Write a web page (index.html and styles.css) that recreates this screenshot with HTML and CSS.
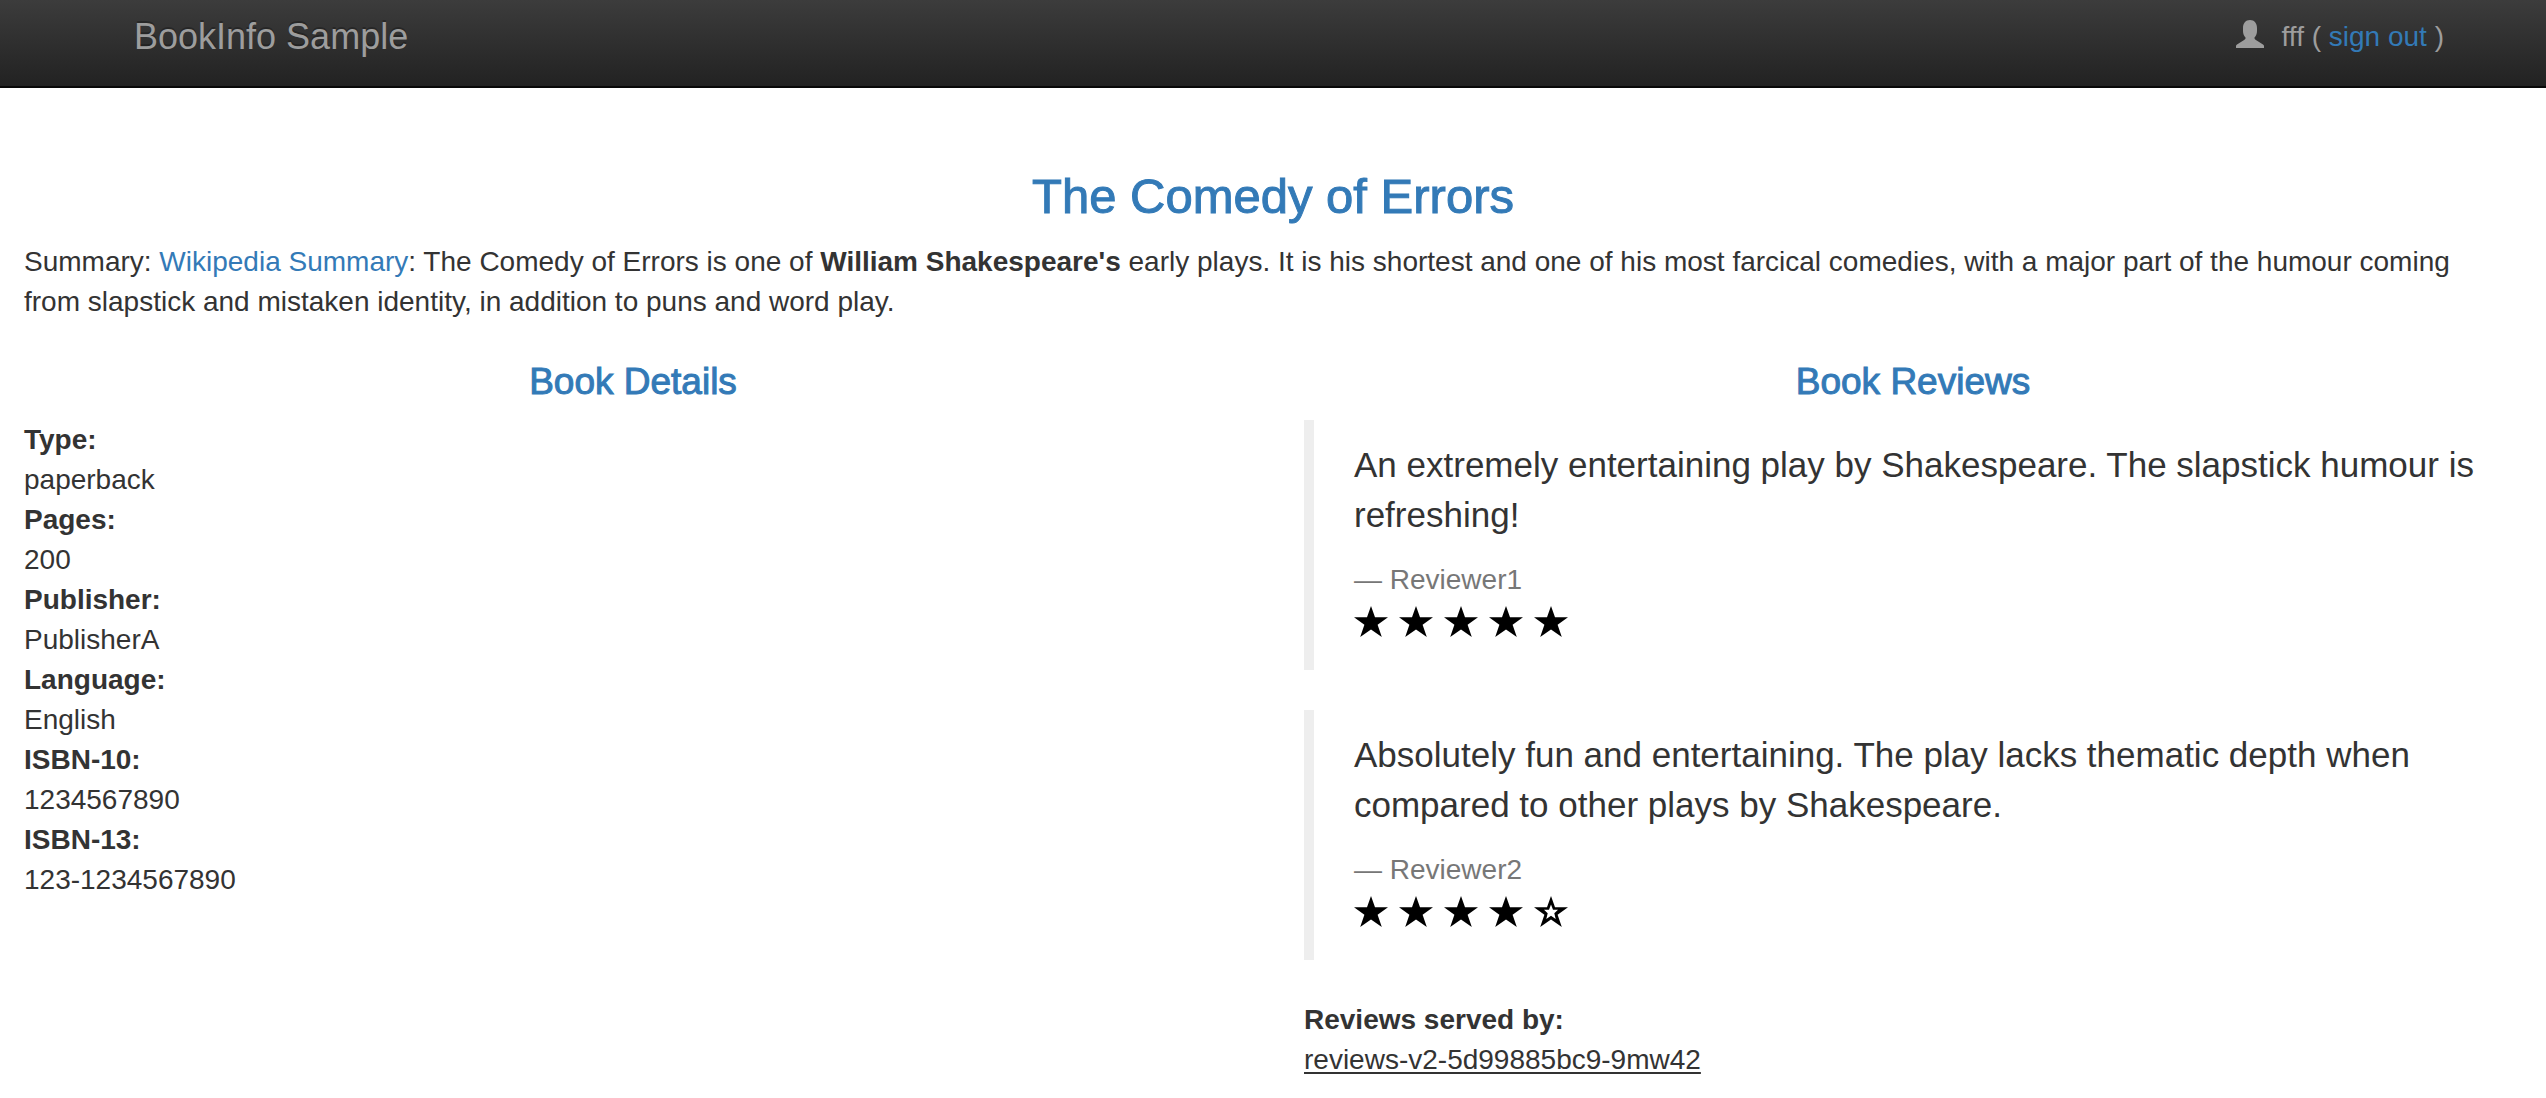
FILE: index.html
```html
<!DOCTYPE html>
<html lang="en">
<head>
<meta charset="utf-8">
<title>Simple Bookstore App</title>
<meta name="viewport" content="width=device-width, initial-scale=1">
<link rel="stylesheet" href="styles.css">
</head>
<body>
<svg class="sprite" aria-hidden="true">
  <symbol id="star" viewBox="0 0 34 31"><path d="M17 0 21 11.2H34L23.6 18.8 27.8 31 17 23.5 6.2 31 10.4 18.8 0 11.2H13Z"/></symbol>
  <symbol id="star-empty" viewBox="0 0 34 31"><path fill-rule="evenodd" d="M17 0 21 11.2H34L23.6 18.8 27.8 31 17 23.5 6.2 31 10.4 18.8 0 11.2H13ZM17 8.500 15 13.800H10L13.700 17.300 12.300 23 17 19.800 21.700 23 20.300 17.300 24 13.800H19Z"/></symbol>
</svg>
<nav class="navbar">
  <a class="brand" href="#">BookInfo Sample</a>
  <p class="user">
    <svg class="user-icon" viewBox="0 0 28 28" aria-hidden="true"><path d="M14 0C9.500 0 7 3.500 7 8v3c0 3 1 5 2.500 6.500v.8c0 .7-.4 1-1 1.400L1 24.500c-.7.400-1 .8-1 1.500V28h28V26c0-.7-.3-1.100-1-1.500l-7.500-4.800c-.6-.4-1-.7-1-1.400v-.8C20 16 21 14 21 11V8c0-4.500-2.500-8-7-8Z"/></svg>
    <span>fff ( <a href="#">sign out</a> )</span>
  </p>
</nav>
<main class="page">
  <h1 class="title">The Comedy of Errors</h1>
  <p class="summary">Summary: <a href="#">Wikipedia Summary</a>: The Comedy of Errors is one of <b>William Shakespeare's</b> early plays. It is his shortest and one of his most farcical comedies, with a major part of the humour coming from slapstick and mistaken identity, in addition to puns and word play.</p>
  <div class="columns">
    <section>
      <h2 class="section-title">Book Details</h2>
      <dl class="details">
        <dt>Type:</dt><dd>paperback</dd>
        <dt>Pages:</dt><dd>200</dd>
        <dt>Publisher:</dt><dd>PublisherA</dd>
        <dt>Language:</dt><dd>English</dd>
        <dt>ISBN-10:</dt><dd>1234567890</dd>
        <dt>ISBN-13:</dt><dd>123-1234567890</dd>
      </dl>
    </section>
    <section>
      <h2 class="section-title">Book Reviews</h2>
      <blockquote class="review">
        <p>An extremely entertaining play by Shakespeare. The slapstick humour is refreshing!</p>
        <small>— Reviewer1</small>
        <div class="stars" role="img" aria-label="5 of 5 stars">
          <svg><use href="#star"/></svg><svg><use href="#star"/></svg><svg><use href="#star"/></svg><svg><use href="#star"/></svg><svg><use href="#star"/></svg>
        </div>
      </blockquote>
      <blockquote class="review">
        <p>Absolutely fun and entertaining. The play lacks thematic depth when compared to other plays by Shakespeare.</p>
        <small>— Reviewer2</small>
        <div class="stars" role="img" aria-label="4 of 5 stars">
          <svg><use href="#star"/></svg><svg><use href="#star"/></svg><svg><use href="#star"/></svg><svg><use href="#star"/></svg><svg><use href="#star-empty"/></svg>
        </div>
      </blockquote>
      <dl class="details">
        <dt>Reviews served by:</dt>
        <dd><u>reviews-v2-5d99885bc9-9mw42</u></dd>
      </dl>
    </section>
  </div>
</main>
</body>
</html>
```
FILE: styles.css
```css
* { box-sizing: border-box; }

body {
  margin: 0;
  background: #fff;
  color: #333;
  font: 28px/40px "Helvetica Neue", "Liberation Sans", Arial, sans-serif;
}

a { color: #337ab7; text-decoration: none; }
a:hover { text-decoration: underline; }

.sprite { display: none; }

.navbar {
  display: flex;
  justify-content: space-between;
  align-items: flex-start;
  min-height: 88px;
  padding: 17px 102px 0 134px;
  border-bottom: 2px solid #080808;
  background: linear-gradient(#3c3c3c, #222);
  color: #9d9d9d;
}

.brand {
  color: inherit;
  font-size: 36px;
  text-shadow: 0 -2px 0 rgba(0, 0, 0, .25);
}

.user { display: flex; gap: 18px; margin: 0; }
.user-icon { width: 28px; height: 28px; margin-top: 3px; fill: currentColor; }

.page { padding: 82px 24px 18px; }

.title,
.section-title {
  color: #337ab7;
  font-weight: 400;
  text-align: center;
  -webkit-text-stroke: 1px currentColor;
}

.title { margin: 0 0 20px; font-size: 49px; line-height: 52px; }
.section-title { margin: 0 0 18px; font-size: 37px; line-height: 40px; }

.summary { margin: 0 0 40px; padding-right: 24px; }

.columns { display: grid; grid-template-columns: 1fr 1fr; gap: 62px; }

.details { margin: 0; }
.details dt { font-weight: 700; }
.details dd { margin: 0; }
.details u { text-underline-offset: 3px; text-decoration-thickness: 2px; text-decoration-skip-ink: none; }

.review {
  margin: 0 0 40px;
  padding: 20px 40px;
  border-left: 10px solid #eee;
}

.review p { margin: 0 0 20px; font-size: 35px; line-height: 50px; }
.review small { display: block; color: #777; font-size: 28px; }

.stars { display: flex; gap: 11px; height: 50px; padding-top: 6px; }
.stars svg { width: 34px; height: 31px; fill: #000; }
```
